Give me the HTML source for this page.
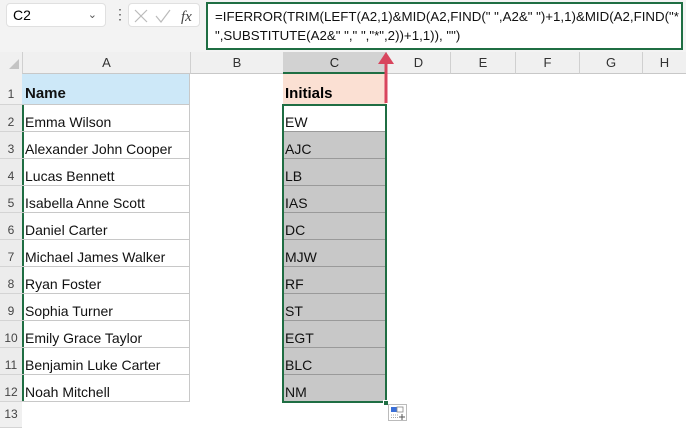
<!DOCTYPE html>
<html><head><style>
*{margin:0;padding:0;box-sizing:border-box}
body{width:686px;height:428px;overflow:hidden;background:#fff;font-family:"Liberation Sans",Arial,sans-serif;position:relative}
.a{position:absolute}
.top{left:0;top:0;width:686px;height:52px;background:#f3f3f3}
.hdr{top:52px;height:22px;background:#f0f0f0;border-bottom:1px solid #c8c8c8;font-size:13px;color:#333;text-align:center;line-height:22px}
.rh{left:0;width:22px;background:#ececec;font-size:12px;color:#444;text-align:center;border-bottom:1px solid #d4d4d4}
.ca{left:22px;width:168px;border-right:1px solid #c8c8c8;border-bottom:1px solid #c8c8c8;font-size:14px;padding-left:3px;color:#111}
.cc{left:283px;width:103px;border-bottom:1px solid #9a9a9a;background:#c8c8c8;font-size:14px;padding-left:2px;color:#111}
</style></head><body>
<div class="a top"></div>
<div class="a" style="left:6px;top:3px;width:100px;height:24px;background:#fff;border-radius:4px;border:1px solid #e0e0e0;font-size:14px;line-height:22px;padding-left:6px">C2<span style="position:absolute;right:8px;top:0;font-size:11px;color:#555">&#8964;</span></div>
<div class="a" style="left:113px;top:6px;font-size:14px;color:#555">&#8942;</div>
<div class="a" style="left:128px;top:3px;width:72px;height:24px;background:#fff;border-radius:4px;border:1px solid #e0e0e0"></div>
<svg class="a" style="left:132px;top:7px" width="66" height="18"><path d="M3 3L15 15M15 3L3 15" stroke="#bbb" stroke-width="1.2"/><path d="M24 9L29 15L38 3" stroke="#bbb" stroke-width="1.2" fill="none"/><text x="49" y="14" font-family="Liberation Serif" font-style="italic" font-size="15" fill="#444">fx</text></svg>
<div class="a" style="left:206px;top:2px;width:477px;height:48px;background:#fff;border:2px solid #1f6e43;font-size:13.3px;line-height:19px;padding:3px 0 0 7px;color:#111;white-space:nowrap;overflow:hidden">=IFERROR(TRIM(LEFT(A2,1)&amp;MID(A2,FIND(" ",A2&amp;" ")+1,1)&amp;MID(A2,FIND("*<br>",SUBSTITUTE(A2&amp;" ",&quot; &quot;,"*",2))+1,1)), "")</div>
<div class="a hdr" style="left:0;width:686px"></div>
<div class="a" style="left:0;top:52px;width:22px;height:22px;background:#f0f0f0"></div>
<svg class="a" style="left:8px;top:58px" width="12" height="12"><path d="M11 1L11 11L1 11Z" fill="#c4c4c4"/></svg>
<div class="a hdr" style="left:22px;width:168px;border-left:1px solid #d0d0d0">A</div>
<div class="a hdr" style="left:190px;width:93px;border-left:1px solid #d0d0d0">B</div>
<div class="a hdr" style="left:283px;width:103px;background:#d2d2d2;border-bottom:2px solid #1f6e43;color:#222">C</div>
<div class="a hdr" style="left:386px;width:64px;border-left:1px solid #d0d0d0">D</div>
<div class="a hdr" style="left:450px;width:65px;border-left:1px solid #d0d0d0">E</div>
<div class="a hdr" style="left:515px;width:64px;border-left:1px solid #d0d0d0">F</div>
<div class="a hdr" style="left:579px;width:63px;border-left:1px solid #d0d0d0">G</div>
<div class="a hdr" style="left:642px;width:44px;border-left:1px solid #d0d0d0">H</div>
<div class="a rh" style="top:74px;height:31px;line-height:40px;background:#f0f0f0">1</div>
<div class="a ca" style="top:74px;height:31px;background:#cde8f8;font-weight:bold;font-size:15px;line-height:40px">Name</div>
<div class="a" style="left:283px;top:74px;width:103px;height:31px;background:#fbe0d3;font-weight:bold;font-size:15px;line-height:40px;padding-left:2px">Initials</div>
<div class="a" style="left:22px;top:105px;width:2px;height:297px;background:#1f6e43"></div>
<div id="rows"></div>
<script>
var n=["Emma Wilson","Alexander John Cooper","Lucas Bennett","Isabella Anne Scott","Daniel Carter","Michael James Walker","Ryan Foster","Sophia Turner","Emily Grace Taylor","Benjamin Luke Carter","Noah Mitchell"];
var c=["EW","AJC","LB","IAS","DC","MJW","RF","ST","EGT","BLC","NM"];
var h="";
for(var i=0;i<11;i++){var t=105+i*27;
h+='<div class="a rh" style="top:'+t+'px;height:27px;line-height:34px">'+(i+2)+'</div>';
h+='<div class="a ca" style="top:'+t+'px;height:27px;line-height:34px">'+n[i]+'</div>';
h+='<div class="a cc" style="top:'+t+'px;height:27px;line-height:34px;'+(i==0?'background:#fff':'')+'">'+c[i]+'</div>';}
h+='<div class="a rh" style="top:402px;height:26px;line-height:24px;background:#f0f0f0">13</div>';
document.getElementById("rows").innerHTML=h;
</script>
<div class="a" style="left:282px;top:104px;width:105px;height:299px;border:2px solid #1f6e43"></div>
<div class="a" style="left:383px;top:400px;width:6px;height:6px;background:#1f6e43;border:1px solid #fff"></div>
<svg class="a" style="left:388px;top:404px" width="20" height="18"><rect x="0.5" y="0.5" width="18" height="16" fill="#fff" stroke="#bbb"/><rect x="3" y="3" width="6" height="5" fill="#3a6fd8"/><rect x="9" y="3" width="6" height="5" fill="none" stroke="#888" stroke-width="0.8"/><path d="M3 11H10M3 13.5H10" stroke="#888" stroke-width="0.8" stroke-dasharray="1 1"/><path d="M14 10V16M11 13H17" stroke="#555"/></svg>
<svg class="a" style="left:376px;top:48px" width="20" height="56"><path d="M10 55V10" stroke="#d8455d" stroke-width="3"/><path d="M2 16L10 4L18 16Z" fill="#d8455d"/></svg>
</body></html>
